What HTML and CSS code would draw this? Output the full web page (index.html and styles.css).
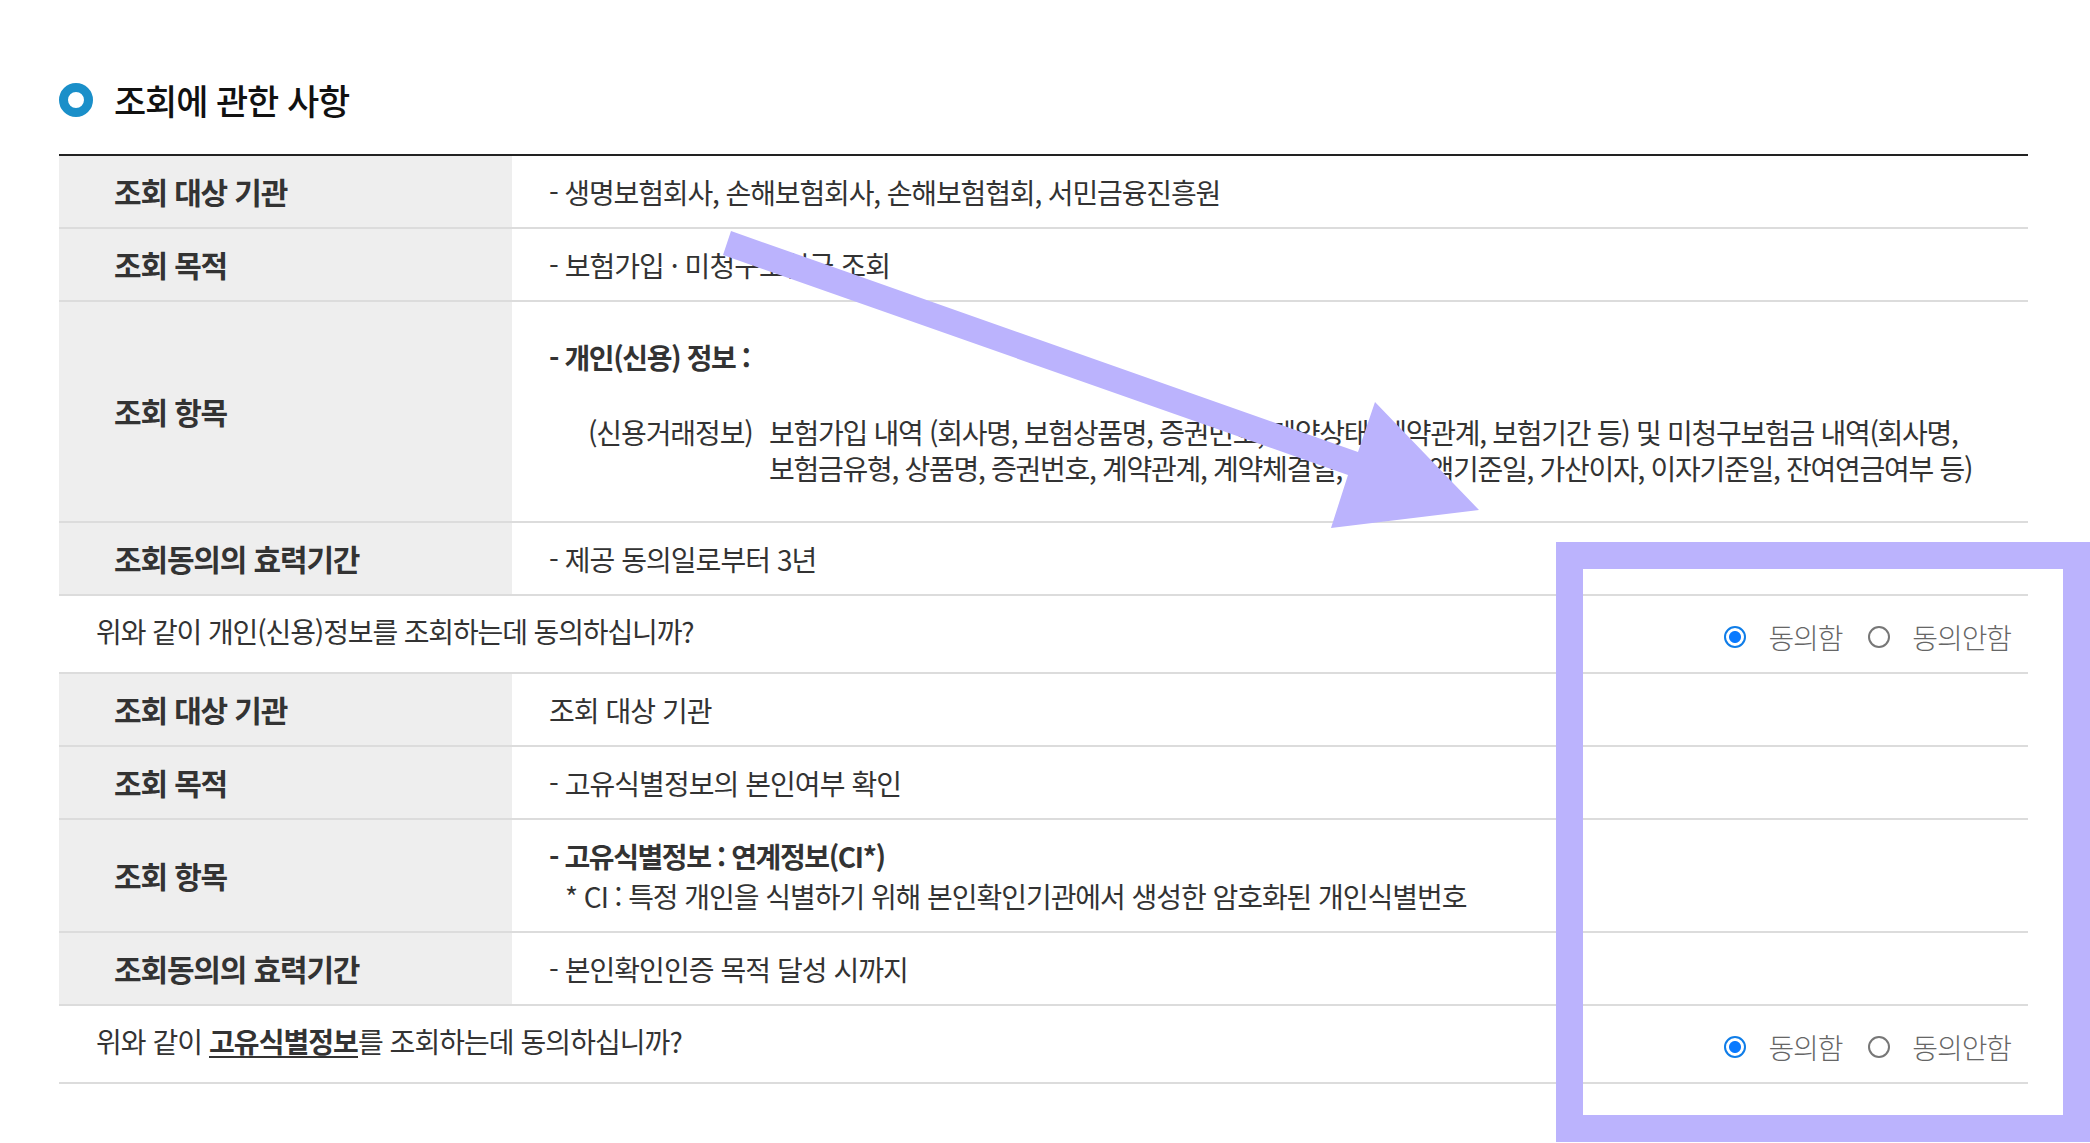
FILE: index.html
```html
<!DOCTYPE html>
<html lang="ko">
<head>
<meta charset="utf-8">
<title>조회에 관한 사항</title>
<link rel="stylesheet" href="styles.css">
</head>
<body>
<main class="page">
  <h2 class="title"><span class="dot"></span><span class="title-text">조회에 관한 사항</span></h2>
  <section class="table">
    <div class="row h73"><div class="th">조회 대상 기관</div><div class="td tight">- 생명보험회사, 손해보험회사, 손해보험협회, 서민금융진흥원</div></div>
    <div class="row h73"><div class="th">조회 목적</div><div class="td">- 보험가입 · 미청구보험금 조회</div></div>
    <div class="row h221"><div class="th">조회 항목</div>
      <div class="td stack">
        <p class="strong gap-big">- 개인(신용) 정보 :</p>
        <div class="credit"><span class="credit-k">(신용거래정보)</span><span class="credit-v">보험가입 내역 (회사명, 보험상품명, 증권번호, 계약상태, 계약관계, 보험기간 등) 및 미청구보험금 내역(회사명,<br>보험금유형, 상품명, 증권번호, 계약관계, 계약체결일, 청구 금액기준일, 가산이자, 이자기준일, 잔여연금여부 등)</span></div>
      </div>
    </div>
    <div class="row h73"><div class="th">조회동의의 효력기간</div><div class="td">- 제공 동의일로부터 3년</div></div>
    <div class="row q"><div class="ask tight">위와 같이 개인(신용)정보를 조회하는데 동의하십니까?</div>
      <div class="opts"><label class="opt"><input type="radio" name="a" checked>동의함</label><label class="opt"><input type="radio" name="a">동의안함</label></div></div>
    <div class="row h73"><div class="th">조회 대상 기관</div><div class="td">조회 대상 기관</div></div>
    <div class="row h73"><div class="th">조회 목적</div><div class="td">- 고유식별정보의 본인여부 확인</div></div>
    <div class="row h113"><div class="th">조회 항목</div>
      <div class="td stack">
        <p class="strong">- 고유식별정보 : 연계정보(CI*)</p>
        <p class="note">* CI : 특정 개인을 식별하기 위해 본인확인기관에서 생성한 암호화된 개인식별번호</p>
      </div>
    </div>
    <div class="row h73"><div class="th">조회동의의 효력기간</div><div class="td">- 본인확인인증 목적 달성 시까지</div></div>
    <div class="row q"><div class="ask">위와 같이 <b class="uline">고유식별정보</b>를 조회하는데 동의하십니까?</div>
      <div class="opts"><label class="opt"><input type="radio" name="b" checked>동의함</label><label class="opt"><input type="radio" name="b">동의안함</label></div></div>
  </section>
</main>
<svg class="overlay" width="2090" height="1143" viewBox="0 0 2090 1143" aria-hidden="true">
  <polygon class="mark" points="731,231 723,255 1348,475 1331,528 1479,510 1375,402 1358,452"/>
  <rect class="frame" x="1569.5" y="555.5" width="507" height="573"/>
</svg>
</body>
</html>
```
FILE: styles.css
```css
* { box-sizing: border-box; }
html, body { margin: 0; padding: 0; background: #fff; }
body { width: 2090px; height: 1143px; overflow: hidden; position: relative; font-family: "Noto Sans CJK KR", "Noto Sans", sans-serif; color: #333; font-size: 28px; letter-spacing: -0.95px; }
.page { padding: 76px 62px 0 59px; }
.title { display: flex; align-items: center; gap: 21px; margin: 0; height: 48px; font-size: 35px; font-weight: 500; color: #111; letter-spacing: -1.1px; }
.title-text { margin-top: -2px; }
.dot { width: 34px; height: 34px; border-radius: 50%; border: 9px solid #1a8fc9; background: #fff; flex: none; }
.table { margin-top: 30px; border-top: 2px solid #222; }
.row { display: flex; border-bottom: 2px solid #dcdcdc; }
.h73 { height: 73px; }
.h221 { height: 221px; }
.h113 { height: 113px; }
.q { height: 78px; align-items: center; justify-content: space-between; }
.th { width: 453px; flex: none; background: #eee; padding: 0 0 2px 55px; display: flex; align-items: center; font-size: 30px; letter-spacing: -1.15px; font-weight: 700; color: #333; }
.td { flex: 1; padding-left: 37px; display: flex; align-items: center; }
.tight { letter-spacing: -1.13px; }
.stack { flex-direction: column; align-items: flex-start; justify-content: center; }
.stack p { margin: 0; line-height: 40px; }
.strong { font-weight: 700; letter-spacing: -1.4px; }
.gap-big { margin-bottom: 36px !important; }
.credit { display: flex; line-height: 36px; padding-left: 39px; margin-top: 1px; white-space: nowrap; }
.credit-k { width: 181px; flex: none; letter-spacing: -1.1px; }
.credit-v { letter-spacing: -1.28px; }
.note { padding-left: 16px; letter-spacing: -1.05px; }
.ask { padding-left: 37px; margin-top: -6px; }
.uline { font-weight: 700; border-bottom: 2px solid #333; line-height: 30px; display: inline-block; }
.opts { display: flex; padding-right: 17px; margin-top: 6px; color: #666; font-weight: 300; gap: 26px; letter-spacing: -1.1px; }
.opt { display: flex; align-items: center; gap: 22px; }
.opt input { appearance: none; -webkit-appearance: none; margin: 0; width: 22px; height: 22px; border-radius: 50%; border: 2px solid #777; background: #fff; }
.opt input:checked { border-color: #0f7de8; background: radial-gradient(circle, #0a7aff 0 5.5px, #fff 6.5px); }
.overlay { position: absolute; left: 0; top: 0; pointer-events: none; }
.mark { fill: #bbb3fd; }
.frame { fill: none; stroke: #bbb3fd; stroke-width: 27px; }
```
